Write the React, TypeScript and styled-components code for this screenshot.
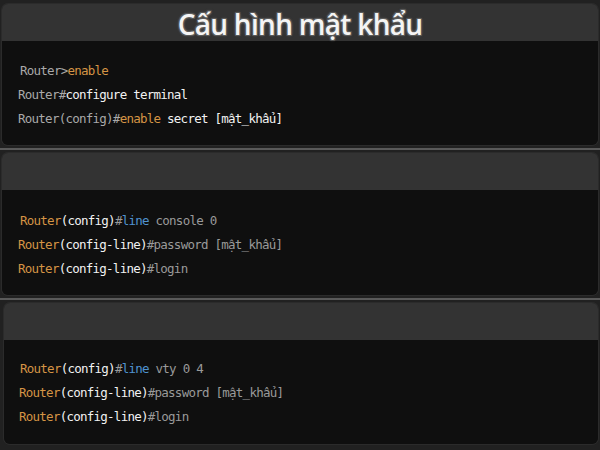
import React from "react";
import styled, { createGlobalStyle } from "styled-components";

const Global = createGlobalStyle`
  html, body { margin: 0; padding: 0; background: #212121; }
  body { width: 600px; height: 450px; overflow: hidden; }
`;

const Page = styled.div`
  width: 600px;
  height: 450px;
  display: flex;
  flex-direction: column;
  background: #212121;
  padding-top: 4px;
  box-sizing: border-box;
`;

const Panel = styled.section<{ $left: number; $h: number }>`
  margin: 0 2px 0 ${(p) => p.$left}px;
  height: ${(p) => p.$h}px;
  display: flex;
  flex-direction: column;
  border-radius: 6px;
  overflow: hidden;
  box-shadow: 0 0 0 1px #2b2b2b;
`;

const Header = styled.header`
  height: 37px;
  flex: none;
  background: #333333;
  display: flex;
  align-items: center;
  justify-content: center;
`;

const Title = styled.h1`
  margin: 0;
  font-family: "Open Sans", "Noto Sans", sans-serif;
  font-weight: 600;
  font-size: 28px;
  letter-spacing: -0.7px;
  color: #f4f4f4;
  line-height: 1;
  transform: translateY(1px);
  text-shadow: -1px -1px 0 #5a5a5a, 1px -1px 0 #5a5a5a, -1px 1px 0 #5a5a5a,
    1px 1px 0 #5a5a5a, 0 0 3px #777;
`;

const Body = styled.div<{ $top: number; $indent: number }>`
  flex: 1;
  background: #0f0f0f;
  padding: ${(p) => p.$top}px 0 0 ${(p) => p.$indent}px;
  display: flex;
  flex-direction: column;
`;

const Line = styled.div<{ $shift?: number }>`
  font-family: "DejaVu Sans Mono", "Liberation Mono", monospace;
  font-size: 12.5px;
  letter-spacing: -0.75px;
  line-height: 24px;
  height: 24px;
  white-space: pre;
  color: #e8e8e8;
  padding-left: ${(p) => p.$shift ?? 0}px;
`;

type Tone = "gray" | "orange" | "white" | "blue" | "dim";
const tones: Record<Tone, string> = {
  gray: "#a9a9a9",
  orange: "#d59445",
  white: "#f2f2f2",
  blue: "#4f93cf",
  dim: "#9a9a9a",
};

const Tok = styled.span<{ $t: Tone }>`
  color: ${(p) => tones[p.$t]};
`;

const Divider = styled.div`
  height: 2px;
  background: #5a5a5a;
  margin: 3px 0 3px;
  flex: none;
`;

export default function App() {
  return (
    <>
      <Global />
      <Page>
        <Panel $left={2} $h={141}>
          <Header>
            <Title>Cấu hình mật khẩu</Title>
          </Header>
          <Body $top={18} $indent={16}>
            <Line $shift={2}>
              <Tok $t="gray">Router&gt;</Tok>
              <Tok $t="orange">enable</Tok>
            </Line>
            <Line>
              <Tok $t="gray">Router#</Tok>
              <Tok $t="white">configure terminal</Tok>
            </Line>
            <Line>
              <Tok $t="gray">Router(config)#</Tok>
              <Tok $t="orange">enable</Tok>
              <Tok $t="white"> secret [mật_khẩu]</Tok>
            </Line>
          </Body>
        </Panel>
        <Divider />
        <Panel $left={2} $h={142}>
          <Header />
          <Body $top={19} $indent={16}>
            <Line $shift={2}>
              <Tok $t="orange">Router</Tok>
              <Tok $t="white">(config)</Tok>
              <Tok $t="dim">#</Tok>
              <Tok $t="blue">line</Tok>
              <Tok $t="dim"> console 0</Tok>
            </Line>
            <Line>
              <Tok $t="orange">Router</Tok>
              <Tok $t="white">(config-line)</Tok>
              <Tok $t="dim">#password [mật_khẩu]</Tok>
            </Line>
            <Line>
              <Tok $t="orange">Router</Tok>
              <Tok $t="white">(config-line)</Tok>
              <Tok $t="dim">#login</Tok>
            </Line>
          </Body>
        </Panel>
        <Divider />
        <Panel $left={4} $h={141}>
          <Header />
          <Body $top={17} $indent={15}>
            <Line $shift={1}>
              <Tok $t="orange">Router</Tok>
              <Tok $t="white">(config)</Tok>
              <Tok $t="dim">#</Tok>
              <Tok $t="blue">line</Tok>
              <Tok $t="dim"> vty 0 4</Tok>
            </Line>
            <Line>
              <Tok $t="orange">Router</Tok>
              <Tok $t="white">(config-line)</Tok>
              <Tok $t="dim">#password [mật_khẩu]</Tok>
            </Line>
            <Line>
              <Tok $t="orange">Router</Tok>
              <Tok $t="white">(config-line)</Tok>
              <Tok $t="dim">#login</Tok>
            </Line>
          </Body>
        </Panel>
      </Page>
    </>
  );
}
